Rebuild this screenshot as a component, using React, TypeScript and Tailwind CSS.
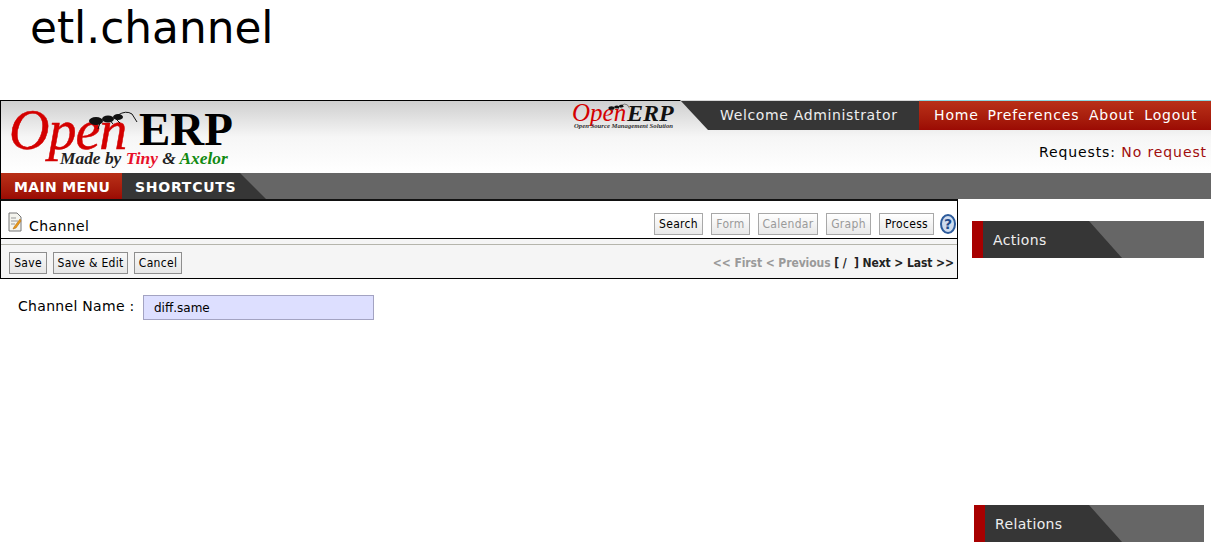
const toolbarButtons = [
  { label: "Search", on: true, w: "w-[49px]" },
  { label: "Form", on: false, w: "w-[39px]" },
  { label: "Calendar", on: false, w: "w-[60px]" },
  { label: "Graph", on: false, w: "w-[45px]" },
  { label: "Process", on: true, w: "w-[55px]" },
];

const formButtons = [
  { label: "Save", w: "w-[38px]" },
  { label: "Save & Edit", w: "w-[75px]" },
  { label: "Cancel", w: "w-[48px]" },
];

function Ant({ className }: { className: string }) {
  return (
    <svg viewBox="0 0 50 20" className={className}>
      <ellipse cx="8" cy="11" rx="7" ry="4" fill="#111" />
      <ellipse cx="20" cy="9" rx="6" ry="3.5" fill="#111" />
      <ellipse cx="30" cy="7" rx="5" ry="3" fill="#111" />
      <path d="M30 5 Q38 0 44 4 L49 12 M20 8 L25 14 M12 13 L10 19 M28 9 L32 13" stroke="#111" strokeWidth="1" fill="none" />
    </svg>
  );
}

function BigLogo() {
  return (
    <div className="relative w-[232px] h-[72px] font-['Liberation_Serif',serif]">
      <span className="absolute left-[8px] top-[-5px] text-[56px] leading-[68px] italic tracking-[-1px] text-[#d40000] [-webkit-text-stroke:0.5px_#d40000]">Open</span>
      <span className="absolute left-[138px] top-0 text-[47px] leading-[56px] font-bold text-black">ERP</span>
      <Ant className="absolute left-[87px] top-[9px] w-[50px] h-[20px]" />
      <span className="absolute left-[59px] top-[47px] text-[17.4px] leading-[20px] italic font-bold text-[#222] whitespace-nowrap">
        Made by <span className="text-[#e8102a]">Tiny</span> &amp; <span className="text-[#128a12]">Axelor</span>
      </span>
    </div>
  );
}

function SmallLogo() {
  return (
    <div className="relative w-[108px] h-[29px] mt-px font-['Liberation_Serif',serif]">
      <span className="absolute left-0 top-[-1px] text-[25px] leading-[26px] italic text-[#d40000]">Open</span>
      <span className="absolute left-[55px] top-[1px] text-[24px] leading-[22px] italic font-bold text-[#111]">ERP</span>
      <Ant className="absolute left-[36px] top-[2px] w-[22px] h-[9px]" />
      <span className="absolute left-[2px] top-[21px] text-[6.7px] leading-[7px] italic font-bold text-[#333] whitespace-nowrap">
        Open Source Management Solution
      </span>
    </div>
  );
}

function SideTitle({ title }: { title: string }) {
  return (
    <div className="flex h-[37px] w-full bg-[#666666]">
      <div className="w-[11px] bg-[#a80000]" />
      <div className="mr-[82px] flex-1 bg-[#363636] pl-[10px] text-[14px] leading-[38px] tracking-[0.35px] text-[#eeeeee] [clip-path:polygon(0_0,calc(100%-33px)_0,100%_100%,0_100%)]">
        {title}
      </div>
    </div>
  );
}

export default function App() {
  return (
    <div className="h-[546px] w-[1213px] overflow-hidden bg-white font-['DejaVu_Sans',sans-serif] text-black">
      <h1 className="h-[100px] pl-[30px] text-[43.8px] leading-[55px] font-normal">etl.channel</h1>

      <div className="w-[1211px]">
        {/* top header */}
        <div className="flex h-[73px] justify-between border-t border-l border-black bg-gradient-to-b from-[#cfcfcf] via-[#f6f6f6] via-50% to-white">
          <BigLogo />
          <div className="flex flex-col items-end">
            <div className="-mt-px flex h-[30px]">
              <SmallLogo />
              <div className="w-[239px] border-t border-[#d8d8d8] bg-[#363636] pl-[40px] text-[14px] leading-[29px] tracking-[0.65px] text-[#eeeeee] [clip-path:polygon(0_0,100%_0,100%_100%,28px_100%)]">
                Welcome Administrator
              </div>
              <div className="flex w-[292px] gap-[9.5px] border-t border-[#8fd8e0] bg-gradient-to-b from-[#b93018] to-[#9b0a04] pl-[15px] text-[14px] leading-[29px] tracking-[0.88px] text-white">
                <span>Home</span>
                <span className="-ml-px">Preferences</span>
                <span>About</span>
                <span>Logout</span>
              </div>
            </div>
            <div className="pt-[12px] pr-[4px] text-[14px] leading-[20px] tracking-[0.9px]">
              Requests: <span className="text-[#a00d0d]">No request</span>
            </div>
          </div>
        </div>

        {/* nav */}
        <div className="flex h-[26px] border-l border-black bg-[#666666] text-[14px] font-bold leading-[29px] text-white">
          <div className="w-[121px] bg-gradient-to-b from-[#b93018] to-[#9b0a04] pl-[13px] tracking-[0.35px]">MAIN MENU</div>
          <div className="w-[144px] bg-[#363636] pl-[13px] tracking-[0.75px] [clip-path:polygon(0_0,118px_0,144px_100%,0_100%)]">SHORTCUTS</div>
        </div>

        <div className="flex">
          {/* content */}
          <div className="w-[958px]">
            <div className="border-x border-t-2 border-black border-t-[#111]">
              <div className="flex h-[37px] items-end justify-between bg-white pb-[3px] pl-[7px] pr-[1px]">
                <div className="flex items-end">
                  <svg viewBox="0 0 14 20" className="mb-[3px] h-[20px] w-[14px]">
                    <path d="M1 1 H9 L13 5 V19 H1 Z" fill="#f4f4ee" stroke="#777" />
                    <path d="M3 6 H8 M3 9 H10 M3 12 H7" stroke="#999" />
                    <path d="M12 7 L6 15 L5 17 L8 16 L13 9 Z" fill="#ea9a1a" stroke="#a5610a" strokeWidth="0.5" />
                  </svg>
                  <span className="ml-[7px] mb-[-1px] text-[14px] leading-[20px] tracking-[0.4px]">Channel</span>
                </div>
                <div className="flex items-center">
                  {toolbarButtons.map((b) => (
                    <div
                      key={b.label}
                      className={`mr-[8px] h-[22px] border border-[#a8a8a8] bg-gradient-to-b from-white to-[#e8e8e8] text-center font-['DejaVu_Sans_Condensed','DejaVu_Sans',sans-serif] text-[12px] leading-[20px] tracking-[0.3px] ${b.w} ${b.on ? "text-black" : "text-[#9a9a9a]"}`}
                    >
                      {b.label}
                    </div>
                  ))}
                  <svg viewBox="0 0 16 20" className="ml-[-2px] h-[20px] w-[16px]">
                    <ellipse cx="8" cy="10" rx="7" ry="9" fill="#cfdcee" stroke="#2d5b9b" strokeWidth="2" />
                    <text x="8" y="15" textAnchor="middle" fontSize="14" fontWeight="bold" fill="#1f4a8a" fontFamily="DejaVu Sans">?</text>
                  </svg>
                </div>
              </div>
              <div className="h-[6px] border-t border-black bg-[#f5f5f5]" />
              <div className="flex h-[35px] items-center justify-between border-y border-b-black border-t-[#b5b5ac] bg-[#f5f5f5] pl-[8px] pr-[3px] pt-[2px]">
                <div className="flex gap-[6px]">
                  {formButtons.map((b) => (
                    <div
                      key={b.label}
                      className={`h-[22px] border border-[#8e8e8e] bg-gradient-to-b from-[#f8f8f8] to-[#e6e6e6] text-center font-['DejaVu_Sans_Condensed','DejaVu_Sans',sans-serif] text-[12px] leading-[20px] tracking-[0.3px] ${b.w}`}
                    >
                      {b.label}
                    </div>
                  ))}
                </div>
                <div className="font-['DejaVu_Sans_Condensed','DejaVu_Sans',sans-serif] text-[12px] font-bold tracking-[-0.08px] text-[#222]">
                  <span className="text-[#9a9a9a]">&lt;&lt; First &lt; Previous</span> [ / &nbsp;] Next &gt; Last &gt;&gt;
                </div>
              </div>
            </div>
            <div className="flex items-start pl-[18px] pt-[16px]">
              <label className="w-[125px] text-[14px] leading-[22px] tracking-[0.3px]">Channel Name :</label>
              <div className="h-[25px] w-[231px] border border-[#a3a3c2] bg-[#dddfff] pl-[10px] text-[12px] leading-[24px]">diff.same</div>
            </div>
          </div>

          {/* sidebar */}
          <div className="flex h-[343px] w-[253px] flex-col justify-between pt-[22px] pr-[7px]">
            <div className="ml-[14px]"><SideTitle title="Actions" /></div>
            <div className="ml-[16px]"><SideTitle title="Relations" /></div>
          </div>
        </div>
      </div>
    </div>
  );
}
